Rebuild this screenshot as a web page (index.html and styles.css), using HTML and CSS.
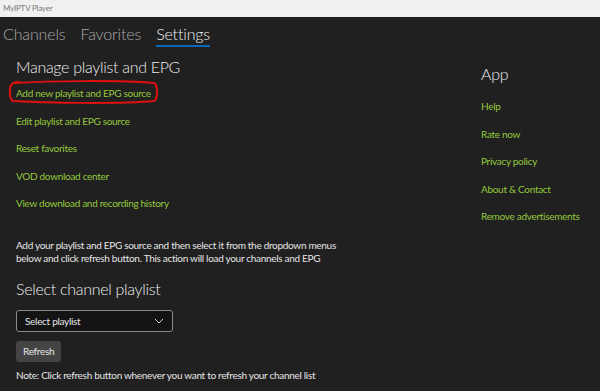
FILE: index.html
```html
<!doctype html>
<html lang="en">
  <head>
    <meta charset="UTF-8" />
    <meta name="viewport" content="width=device-width, initial-scale=1.0" />
    <title>MyIPTV Player</title>
    <link rel="stylesheet" href="styles.css">
  </head>
  <body>
    <div class="titlebar">MyIPTV Player</div>

    <nav class="tabs">
      <span class="tab">Channels</span>
      <span class="tab">Favorites</span>
      <span class="tab active">Settings</span>
    </nav>

    <div class="content">
      <div class="left">
        <h2>Manage playlist and EPG</h2>
        <ul class="links">
          <li class="marked">
            <a href="#">Add new playlist and EPG source</a>
            <!-- hand drawn highlight around the first link -->
            <svg class="scribble" width="152" height="26" viewBox="0 0 152 26">
              <path d="M6 4 C40 2 110 1 146 4 C150 5 150 20 146 22 C110 25 40 24 5 22 C1 20 1 8 4 5 C6 3 10 3 12 3"
                    fill="none" stroke="#e01010" stroke-width="2" />
            </svg>
          </li>
          <li><a href="#">Edit playlist and EPG source</a></li>
          <li><a href="#">Reset favorites</a></li>
          <li><a href="#">VOD download center</a></li>
          <li><a href="#">View download and recording history</a></li>
        </ul>

        <p class="hint">
          Add your playlist and EPG source and then select it from the dropdown menus<br>
          below and click refresh button. This action will load your channels and EPG
        </p>

        <h2>Select channel playlist</h2>
        <div class="select">
          <span>Select playlist</span>
          <svg width="10" height="6" viewBox="0 0 10 6">
            <path d="M1 1 L5 5 L9 1" fill="none" stroke="#cfcfcf" stroke-width="1" />
          </svg>
        </div>
        <button class="btn">Refresh</button>
        <p class="note">Note: Click refresh button whenever you want to refresh your channel list</p>
      </div>

      <div class="right">
        <h2>App</h2>
        <ul class="links">
          <li><a href="#">Help</a></li>
          <li><a href="#">Rate now</a></li>
          <li><a href="#">Privacy policy</a></li>
          <li><a href="#">About &amp; Contact</a></li>
          <li><a href="#">Remove advertisements</a></li>
        </ul>
      </div>
    </div>
  </body>
</html>
```

FILE: styles.css
```css
body {
  margin: 0;
  background: #202020;
  color: #e6e6e6;
  font-family: Lato, "Noto Sans", sans-serif;
  height: 391px;
  overflow: hidden;
}

.titlebar {
  height: 17px;
  background: #f0f0f0;
  color: #7a7a7a;
  font-size: 8px;
  letter-spacing: -0.2px;
  line-height: 17px;
  padding-left: 3px;
}

.tabs {
  display: flex;
  gap: 15px;
  padding: 6px 0 0 3px;
  height: 24px;
}
.tab {
  font-size: 16px;
  letter-spacing: -0.15px;
  font-weight: 300;
  color: #a8a8a8;
  line-height: 22px;
  height: 24px;
  box-sizing: border-box;
}
.tab.active {
  color: #f0f0f0;
  border-bottom: 2px solid #0a66b8;
}

.content {
  display: flex;
  padding: 0 16px;
}
.left {
  flex: none;
  width: 465px;
}
.right {
  flex: 1;
  white-space: nowrap;
}

h2 {
  font-size: 16px;
  letter-spacing: -0.3px;
  font-weight: 300;
  margin: 0;
  line-height: 24px;
  color: #ececec;
}
.left > h2:first-child {
  margin-top: 8px;
}
.right > h2 {
  margin-top: 15px;
}
.right .links {
  margin-top: 12px;
}

.links {
  list-style: none;
  margin: 6px 0 0;
  padding: 0;
}
.links li {
  height: 27.5px;
  line-height: 16px;
  font-size: 10px;
  letter-spacing: -0.3px;
}
.links a {
  color: #94c83c;
  text-decoration: none;
}
.marked {
  position: relative;
}
.scribble {
  position: absolute;
  left: -8px;
  top: -6px;
}

.hint,
.note,
.select,
.btn {
  font-size: 10px;
  letter-spacing: -0.3px;
}

.hint {
  line-height: 13px;
  margin: 16px 0 12px;
}

.select {
  height: 20px;
  margin-top: 9px;
  border: 1px solid #8a8a8a;
  border-radius: 3px;
  background: #131313;
  display: flex;
  align-items: center;
  justify-content: space-between;
  padding: 0 8px;
  width: 139px;
}

.btn {
  display: block;
  margin-top: 9px;
  height: 21px;
  padding: 0 7px;
  background: #444;
  color: #e6e6e6;
  border: none;
  border-radius: 3px;
  font-family: inherit;
}

.note {
  margin: 7px 0 0;
}
```
